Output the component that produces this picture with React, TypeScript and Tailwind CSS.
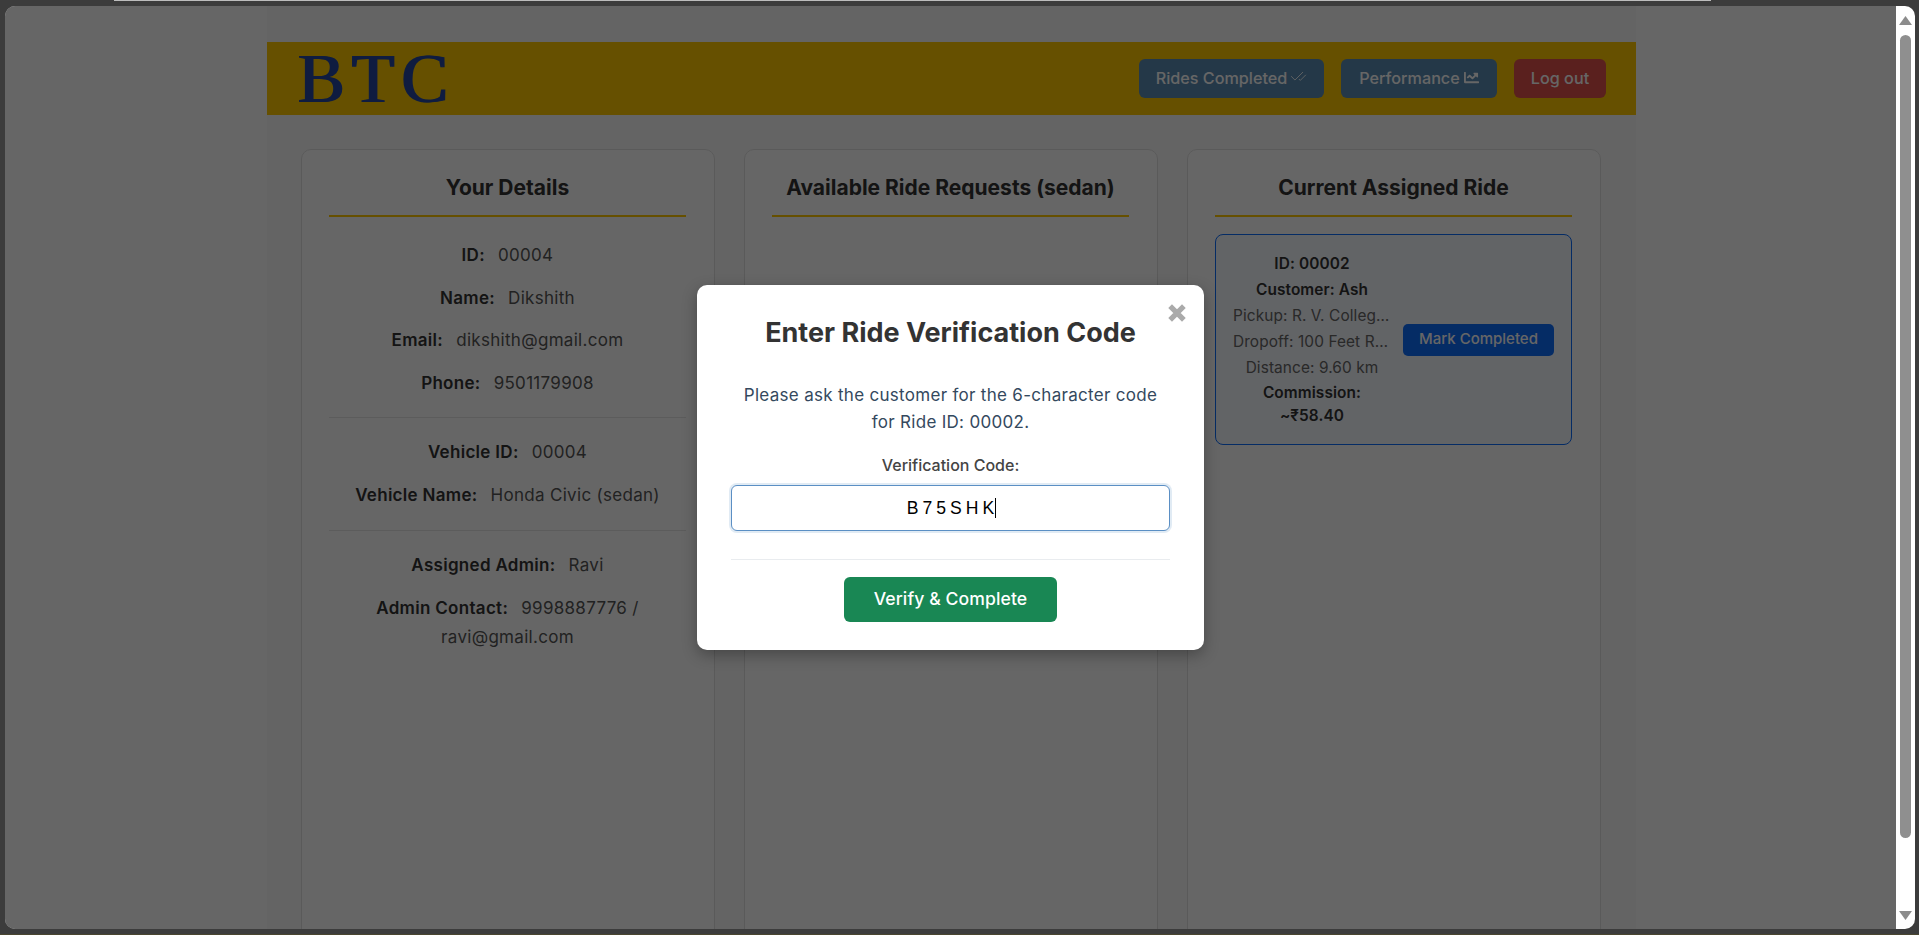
import React from "react";
import { CheckCheck } from "lucide-react";
import { FaChartLine } from "react-icons/fa";

const font = "font-['Inter','Noto_Sans',sans-serif]";

function Row({ label, value }: { label: string; value: string }) {
  return (
    <p className="text-[17px] tracking-[0.3px] leading-[29px] mb-[13.5px] text-[#555] text-center">
      <strong className="font-semibold text-[#333] mr-[8px]">{label}</strong> {value}
    </p>
  );
}

function Card({ title, children }: { title: string; children?: React.ReactNode }) {
  return (
    <section className="w-[414px] h-[900px] shrink-0 bg-white border border-[#e2e2e2] rounded-[10px] px-[27.5px] pt-[26px]">
      <h2 className="text-[21px] leading-[24px] font-bold text-[#333] text-center pb-[10px] border-b-2 border-[#ffc800] h-[41px] mb-[17px]">
        {title}
      </h2>
      {children}
    </section>
  );
}

export default function App() {
  return (
    <div className={`${font} relative h-[935px] w-[1919px] overflow-hidden bg-[#3c3c3c] pt-[6px] pl-[5px] pr-[4px] pb-[6px]`}>
      <div className="absolute top-0 left-[114px] h-px w-[1597px] bg-[#bdbdbd]" />
      <div className="absolute bottom-0 left-0 h-px w-full bg-[#4a4630]" />
      <div className="flex h-[923px] overflow-hidden rounded-[10px]">
        <main className="relative flex-1 overflow-hidden bg-white">
          <div className="ml-[262px] h-full w-[1369px] bg-[#fafafa] pt-[36px]">
            <header className="flex h-[73px] items-center justify-between bg-[#ffc800] pl-[32px] pr-[30px]">
              <span className="font-['Liberation_Serif',serif] text-[70px] leading-none tracking-[7px] text-[#2648a0] [text-shadow:-2px_0_0_#2648a0]">BTC</span>
              <nav className="flex gap-[17px] text-[16.2px] font-medium text-white">
                <button className="flex h-[39px] w-[185px] items-center justify-center gap-[3px] rounded-[6px] bg-[#5a8cb4]">
                  Rides Completed <CheckCheck size={17} strokeWidth={1.25} className="-mt-[4px]" />
                </button>
                <button className="flex h-[39px] w-[156px] items-center justify-center gap-[4px] rounded-[6px] bg-[#5a8cb4]">
                  Performance <FaChartLine size={15} className="-mt-[3px]" />
                </button>
                <button className="h-[39px] w-[92px] rounded-[6px] bg-[#e0504c]">Log out</button>
              </nav>
            </header>
            <div className="flex gap-[29px] pl-[33.5px] pt-[34px]">
              <Card title="Your Details">
                <div className="pt-[7px]">
                  <Row label="ID:" value="00004" />
                  <Row label="Name:" value="Dikshith" />
                  <Row label="Email:" value="dikshith@gmail.com" />
                  <Row label="Phone:" value="9501179908" />
                  <hr className="border-[#e6e6e6] mt-[19.5px] mb-[20px]" />
                  <Row label="Vehicle ID:" value="00004" />
                  <Row label="Vehicle Name:" value="Honda Civic (sedan)" />
                  <hr className="border-[#e6e6e6] mt-[20px] mb-[20.5px]" />
                  <Row label="Assigned Admin:" value="Ravi" />
                  <Row label="Admin Contact:" value="9998887776 / ravi@gmail.com" />
                </div>
              </Card>
              <Card title="Available Ride Requests (sedan)" />
              <Card title="Current Assigned Ride">
                <div className="flex h-[211px] items-center gap-[12px] rounded-[8px] border border-[#0d6efd] bg-[#f6f9ff] pl-[17px] pr-[17px]">
                  <div className="w-[158px] shrink-0 pb-[2px] text-center text-[15.4px] tracking-[0.1px] leading-[26px] text-[#666]">
                    <p className="font-semibold text-[#333]">ID: 00002</p>
                    <p className="font-semibold text-[#333]">Customer: Ash</p>
                    <p className="truncate">Pickup: R. V. College of Engineering</p>
                    <p className="truncate">Dropoff: 100 Feet Ring Road</p>
                    <p>Distance: 9.60 km</p>
                    <p className="font-semibold leading-[23px] text-[#333]">Commission: ~₹58.40</p>
                  </div>
                  <button className="h-[32px] w-[151px] shrink-0 rounded-[5px] bg-[#0d6efd] text-[15px] font-medium text-white">
                    Mark Completed
                  </button>
                </div>
              </Card>
            </div>
          </div>

          <div className="absolute inset-0 flex items-center justify-center bg-black/60">
            <div className="relative h-[365px] w-[507px] rounded-[10px] bg-white px-[34px] pt-[30px] text-center shadow-[0_5px_15px_rgba(0,0,0,0.3)]">
              <svg viewBox="0 0 16 16" className="absolute right-[17px] top-[18px] h-[20px] w-[20px]">
                <path d="M2.5 2.5 13.5 13.5M13.5 2.5 2.5 13.5" stroke="#aaaaaa" strokeWidth="4.2" fill="none" />
              </svg>
              <h3 className="text-[27px] leading-[36px] font-bold text-[#333]">Enter Ride Verification Code</h3>
              <p className="mt-[31px] text-[17px] tracking-[0.3px] leading-[27px] text-[#34495e]">
                Please ask the customer for the 6-character code
                <br />
                for Ride ID: 00002.
              </p>
              <label className="mt-[18px] block text-[16px] leading-[22px] font-medium text-[#444]">Verification Code:</label>
              <div className="mt-[9px] flex h-[46px] items-center justify-center rounded-[6px] border border-[#5b8fc4] bg-white font-['Liberation_Sans',sans-serif] text-[17.6px] tracking-[4px] text-black shadow-[0_0_0_2px_rgba(91,143,196,0.18)]">
                <span className="pl-[2px]">B75SHK</span>
                <span className="-ml-[3px] h-[20px] w-px bg-black" />
              </div>
              <div className="mt-[28px] border-t border-[#e9ecef]" />
              <button className="mt-[17px] h-[45px] w-[213px] rounded-[6px] bg-[#198754] text-[17.6px] tracking-[0.1px] font-medium text-white">
                Verify &amp; Complete
              </button>
            </div>
          </div>
        </main>

        <aside className="flex w-[19px] flex-col items-center bg-white pt-[10px] pb-[9px]">
          <svg viewBox="0 0 13 9" className="h-[9px] w-[13px]"><path d="M6.5 0 13 9H0z" fill="#8c8c8c" /></svg>
          <div className="mt-[10px] h-[803px] w-[11px] rounded-full bg-[#8f8f8f]" />
          <div className="flex-1" />
          <svg viewBox="0 0 13 9" className="h-[9px] w-[13px]"><path d="M0 0h13L6.5 9z" fill="#8c8c8c" /></svg>
        </aside>
      </div>
    </div>
  );
}
